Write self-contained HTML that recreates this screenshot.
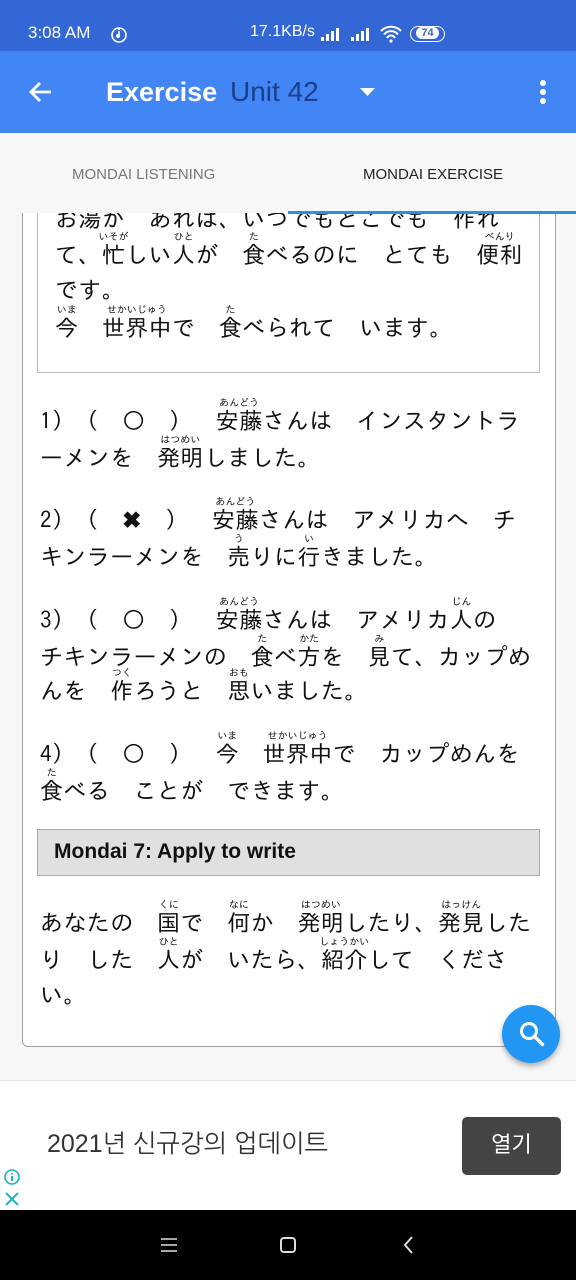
<!DOCTYPE html>
<html><head><meta charset="utf-8"><style>
*{margin:0;padding:0;box-sizing:border-box}
body{width:576px;height:1280px;overflow:hidden;position:relative;background:#f7f7f7;font-family:"Liberation Sans","Noto Sans CJK JP",sans-serif}
.sb{position:absolute;left:0;top:0;width:576px;height:51px;background:#3467d6;color:#fff;font-size:17px}
.ab{position:absolute;left:0;top:51px;width:576px;height:82px;background:#4285f4;color:#fff}
.tabs{position:absolute;left:0;top:133px;width:576px;height:80px;background:#f7f7f7;font-size:15px;z-index:3}
.content{position:absolute;left:0;top:213px;width:576px;height:867px;overflow:hidden;background:#f7f7f7}
.card{position:absolute;left:22px;top:-100px;width:534px;height:934px;background:#fff;border:1.5px solid #9e9e9e;border-radius:6px}
.box{position:absolute;left:37px;top:-60px;width:503px;height:220px;border:1.5px solid #bbb}
.l{position:absolute;left:40px;font-size:23px;line-height:30px;white-space:nowrap;color:#111;font-family:"IPAGothic","Noto Sans CJK JP",sans-serif;letter-spacing:0.4px}
.r{position:relative}
.r i{position:absolute;left:-10px;right:-10px;top:-11px;font-size:10px;line-height:10px;text-align:center;font-style:normal;white-space:nowrap;letter-spacing:0}
.hdr{position:absolute;left:37px;top:616px;width:503px;height:47px;background:#e0e0e0;border:1.5px solid #aaa;font-weight:bold;font-size:21px;line-height:44px;padding-left:16px;color:#111}
.fab{position:absolute;left:502px;top:1005px;width:58px;height:58px;border-radius:50%;background:#2196f3;box-shadow:0 3px 6px rgba(0,0,0,.3);z-index:5}
.ad{position:absolute;left:0;top:1080px;width:576px;height:130px;background:#fff;border-top:1px solid #e5e5e5}
.nav{position:absolute;left:0;top:1210px;width:576px;height:70px;background:#000}
</style></head><body>
<div class="sb">
<span style="position:absolute;left:28px;top:23px;font-size:17px">3:08 AM</span>
<svg style="position:absolute;left:110px;top:25px" width="18" height="18" viewBox="0 0 18 18"><circle cx="9" cy="10" r="7" fill="none" stroke="#fff" stroke-width="1.6"/><path d="M9 6v5M9 3v2" stroke="#fff" stroke-width="1.6"/><circle cx="8" cy="11" r="2" fill="#fff"/></svg>
<span style="position:absolute;left:250px;top:23px;font-size:16px">17.1KB/s</span>
<svg style="position:absolute;left:320px;top:27px" width="22" height="14"><rect x="1" y="10" width="3" height="4" fill="#fff"/><rect x="6" y="7" width="3" height="7" fill="#fff"/><rect x="11" y="4" width="3" height="10" fill="#fff"/><rect x="16" y="1" width="3" height="13" fill="#fff"/></svg>
<svg style="position:absolute;left:350px;top:27px" width="22" height="14"><rect x="1" y="10" width="3" height="4" fill="#fff"/><rect x="6" y="7" width="3" height="7" fill="#fff"/><rect x="11" y="4" width="3" height="10" fill="#fff"/><rect x="16" y="1" width="3" height="13" fill="#fff"/></svg>
<svg style="position:absolute;left:379px;top:25px" width="24" height="18" viewBox="0 0 24 18"><path d="M2 6a14 14 0 0 1 20 0M5 9.5a9 9 0 0 1 14 0M8 13a4.5 4.5 0 0 1 8 0" fill="none" stroke="#fff" stroke-width="2"/><circle cx="12" cy="16" r="1.6" fill="#fff"/></svg>
<div style="position:absolute;left:410px;top:26px;width:35px;height:16px;border:1.5px solid #fff;border-radius:8px;font-size:11px;text-align:center;line-height:13px"><span style="background:#fff;color:#3467d6;border-radius:6px;padding:0 5px;font-weight:bold">74</span></div>
</div>
<div class="ab">
<svg style="position:absolute;left:27px;top:29px" width="26" height="24" viewBox="0 0 26 24"><path d="M24 12H4M13 3l-9 9 9 9" fill="none" stroke="#fff" stroke-width="2.8"/></svg>
<span style="position:absolute;left:106px;top:26px;font-size:27px;font-weight:bold">Exercise</span>
<span style="position:absolute;left:230px;top:25px;font-size:28px;color:#1b3f8a">Unit 42</span>
<svg style="position:absolute;left:360px;top:37px" width="16" height="9"><path d="M0 0h15l-7.5 8z" fill="#fff"/></svg>
<svg style="position:absolute;left:539px;top:28px" width="8" height="26"><circle cx="4" cy="4" r="3" fill="#fff"/><circle cx="4" cy="13" r="3" fill="#fff"/><circle cx="4" cy="22" r="3" fill="#fff"/></svg>
</div>
<div class="tabs">
<span style="position:absolute;left:72px;top:33px;color:#777">MONDAI LISTENING</span>
<span style="position:absolute;left:363px;top:33px;color:#222">MONDAI EXERCISE</span>
<div style="position:absolute;left:288px;top:78px;width:288px;height:3px;background:#2d8fe0"></div>
</div>
<div class="content">
<div class="card"></div>
<div class="box"></div>
<div class="l" style="left:55px;top:-9px">お<span class="r">湯<i>ゆ</i></span>が　あれは、いつでもどこでも　<span class="r">作<i>つく</i></span>れ</div>
<div class="l" style="left:55px;top:27px">て、<span class="r">忙<i>いそが</i></span>しい<span class="r">人<i>ひと</i></span>が　<span class="r">食<i>た</i></span>べるのに　とても　<span class="r">便利<i>べんり</i></span></div>
<div class="l" style="left:55px;top:62px">です。</div>
<div class="l" style="left:55px;top:100px"><span class="r">今<i>いま</i></span>　<span class="r">世界中<i>せかいじゅう</i></span>で　<span class="r">食<i>た</i></span>べられて　います。</div>

<div class="l" style="top:193px">1）（　〇　）　<span class="r">安藤<i>あんどう</i></span>さんは　インスタントラ</div>
<div class="l" style="top:230px">ーメンを　<span class="r">発明<i>はつめい</i></span>しました。</div>
<div class="l" style="top:292px">2）（　<b>✖</b>　）　<span class="r">安藤<i>あんどう</i></span>さんは　アメリカへ　チ</div>
<div class="l" style="top:329px">キンラーメンを　<span class="r">売<i>う</i></span>りに<span class="r">行<i>い</i></span>きました。</div>
<div class="l" style="top:392px">3）（　〇　）　<span class="r">安藤<i>あんどう</i></span>さんは　アメリカ<span class="r">人<i>じん</i></span>の</div>
<div class="l" style="top:429px">チキンラーメンの　<span class="r">食<i>た</i></span>べ<span class="r">方<i>かた</i></span>を　<span class="r">見<i>み</i></span>て、カップめ</div>
<div class="l" style="top:463px">んを　<span class="r">作<i>つく</i></span>ろうと　<span class="r">思<i>おも</i></span>いました。</div>
<div class="l" style="top:526px">4）（　〇　）　<span class="r">今<i>いま</i></span>　<span class="r">世界中<i>せかいじゅう</i></span>で　カップめんを</div>
<div class="l" style="top:563px"><span class="r">食<i>た</i></span>べる　ことが　できます。</div>
<div class="hdr" style="font-family:'Liberation Sans',sans-serif">Mondai 7: Apply to write</div>
<div class="l" style="top:695px">あなたの　<span class="r">国<i>くに</i></span>で　<span class="r">何<i>なに</i></span>か　<span class="r">発明<i>はつめい</i></span>したり、<span class="r">発見<i>はっけん</i></span>した</div>
<div class="l" style="top:732px">り　した　<span class="r">人<i>ひと</i></span>が　いたら、<span class="r">紹介<i>しょうかい</i></span>して　くださ</div>
<div class="l" style="top:767px">い。</div>
</div>
<div class="fab"><svg style="position:absolute;left:16px;top:15px" width="28" height="28" viewBox="0 0 28 28"><circle cx="11" cy="11" r="7.5" fill="none" stroke="#fff" stroke-width="3"/><path d="M16.5 16.5l8 8" stroke="#fff" stroke-width="3.4" stroke-linecap="round"/></svg></div>
<div class="ad">
<span style="position:absolute;left:47px;top:47px;font-size:25px;color:#333;font-family:'Liberation Sans','NanumGothic','Noto Sans CJK KR',sans-serif">2021년 신규강의 업데이트</span>
<div style="position:absolute;left:462px;top:36px;width:99px;height:58px;background:#444;border-radius:5px;color:#fff;font-size:22px;text-align:center;line-height:56px;font-family:'Liberation Sans','Noto Sans CJK KR',sans-serif">열기</div>
<svg style="position:absolute;left:3px;top:87px" width="18" height="40" viewBox="0 0 18 40"><circle cx="9" cy="9" r="7" fill="none" stroke="#1fb3c4" stroke-width="1.6"/><path d="M9 8v5M9 5v1.5" stroke="#1fb3c4" stroke-width="2"/><path d="M3 25l12 12M15 25L3 37" stroke="#1fb3c4" stroke-width="2"/></svg>
</div>
<div class="nav">
<svg style="position:absolute;left:160px;top:27px" width="18" height="16"><path d="M1 2h16M1 8h16M1 14h16" stroke="#ddd" stroke-width="1.6"/></svg>
<svg style="position:absolute;left:279px;top:26px" width="18" height="18"><rect x="2" y="2" width="14" height="14" rx="3" fill="none" stroke="#ddd" stroke-width="2"/></svg>
<svg style="position:absolute;left:402px;top:25px" width="12" height="20"><path d="M10 2L3 10l7 8" fill="none" stroke="#ddd" stroke-width="2"/></svg>
</div>
</body></html>
